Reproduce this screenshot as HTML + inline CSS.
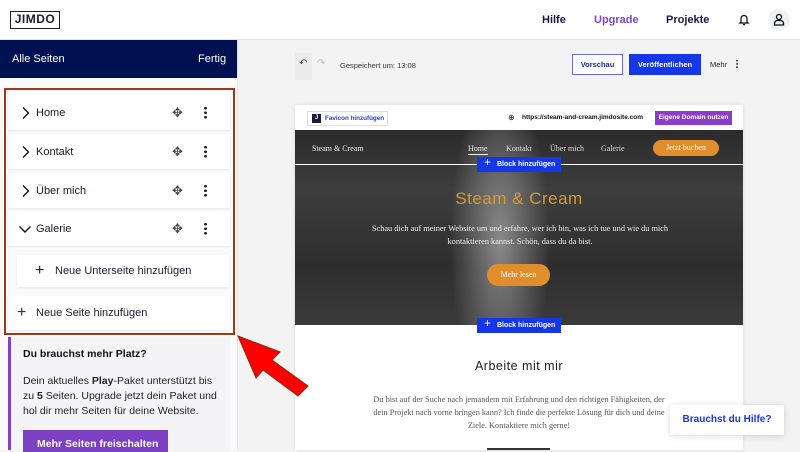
<!DOCTYPE html>
<html><head><meta charset="utf-8"><style>
*{box-sizing:border-box;margin:0;padding:0}
body{width:800px;height:450px;overflow:hidden;font-family:"Liberation Sans",sans-serif;background:#f3f3f4;position:relative;color:#1a1a2e}
.a{position:absolute}
.serif{font-family:"Liberation Serif",serif}
.row{position:absolute;left:8px;width:222px;height:35px;background:#fff;box-shadow:0 1px 2px rgba(0,0,0,.08);font-size:11px;display:flex;align-items:center}
.row .t{position:absolute;left:28px}
.row svg.ch{position:absolute;left:12px}
.mv{position:absolute;left:164px;font-size:13px;color:#444}
.dots{position:absolute;left:196px;width:3px;height:13px;background:radial-gradient(circle,#222 1.3px,transparent 1.5px) 0 0/3px 4.5px repeat-y}
.nw{white-space:nowrap}
</style></head><body>
<div class="a" style="left:0;top:0;width:800px;height:40px;background:#fff;border-bottom:1px solid #e6e6e6"></div>
<div class="a" style="left:10px;top:11px;width:50px;height:18px;border:1.5px solid #1a1a3a;font-weight:bold;font-size:12px;text-align:center;line-height:15px;letter-spacing:.5px;color:#1a1a3a">JIMDO</div>
<div class="a" style="left:542px;top:14px;font-size:11px;font-weight:bold;color:#1a1a4a">Hilfe</div>
<div class="a" style="left:594px;top:14px;font-size:11px;font-weight:bold;color:#7d45c6">Upgrade</div>
<div class="a" style="left:666px;top:14px;font-size:11px;font-weight:bold;color:#1a1a4a">Projekte</div>
<svg class="a" style="left:738px;top:13px" width="12" height="13" viewBox="0 0 12 13"><path d="M3 9V5.5a3 3 0 0 1 6 0V9l1 1H2z M5 11.5h2" fill="none" stroke="#111" stroke-width="1.3"/></svg>
<div class="a" style="left:768px;top:9px;width:22px;height:22px;border-radius:50%;background:#f0f1f5"></div>
<svg class="a" style="left:773px;top:13px" width="12" height="13" viewBox="0 0 12 13"><circle cx="6" cy="4" r="2.5" fill="none" stroke="#111" stroke-width="1.3"/><path d="M1.5 12v-1.5a3 3 0 0 1 3-3h3a3 3 0 0 1 3 3V12z" fill="none" stroke="#111" stroke-width="1.3"/></svg>
<div class="a" style="left:0;top:40px;width:238px;height:410px;background:#fafafb;border-right:1px solid #e3e3e3"></div>
<div class="a" style="left:0;top:40px;width:237px;height:38px;background:#001152"></div>
<div class="a" style="left:12px;top:53px;color:#fff;font-size:11px">Alle Seiten</div>
<div class="a" style="left:198px;top:53px;color:#fff;font-size:11px">Fertig</div>
<div class="row" style="top:95px"><svg class="ch" width="10" height="14" viewBox="0 0 10 14"><path d="M3 1.5l5.5 5.5L3 12.5" fill="none" stroke="#111" stroke-width="1.4"/></svg><span class="t">Home</span><span class="mv">✥</span><span class="dots"></span></div>
<div class="row" style="top:134px"><svg class="ch" width="10" height="14" viewBox="0 0 10 14"><path d="M3 1.5l5.5 5.5L3 12.5" fill="none" stroke="#111" stroke-width="1.4"/></svg><span class="t">Kontakt</span><span class="mv">✥</span><span class="dots"></span></div>
<div class="row" style="top:173px"><svg class="ch" width="10" height="14" viewBox="0 0 10 14"><path d="M3 1.5l5.5 5.5L3 12.5" fill="none" stroke="#111" stroke-width="1.4"/></svg><span class="t">Über mich</span><span class="mv">✥</span><span class="dots"></span></div>
<div class="row" style="top:211px"><svg class="ch" style="left:10px" width="14" height="10" viewBox="0 0 14 10"><path d="M1.5 2.5L7 8l5.5-5.5" fill="none" stroke="#111" stroke-width="1.4"/></svg><span class="t">Galerie</span><span class="mv">✥</span><span class="dots"></span></div>
<div class="row" style="top:255px;left:17px;width:212px;height:32px"><span style="position:absolute;left:18px;font-size:16px;color:#1a1a4a">+</span><span style="position:absolute;left:38px">Neue Unterseite hinzufügen</span></div>
<div class="row" style="top:296px;height:34px"><span style="position:absolute;left:9px;font-size:16px;color:#333">+</span><span class="t">Neue Seite hinzufügen</span></div>
<div class="a" style="left:4px;top:88px;width:231px;height:247px;border:2px solid #9b3a1a"></div>
<div class="a" style="left:8px;top:337px;width:222px;height:113px;background:#f4f4f6;border-left:3px solid #7d45c6"></div>
<div class="a" style="left:23px;top:348px;font-size:10.5px;font-weight:bold;color:#111">Du brauchst mehr Platz?</div>
<div class="a" style="left:23px;top:374px;font-size:10.5px;line-height:15px;color:#222;width:200px">Dein aktuelles <b>Play</b>-Paket unterstützt bis zu <b>5</b> Seiten. Upgrade jetzt dein Paket und hol dir mehr Seiten für deine Website.</div>
<div class="a" style="left:23px;top:430px;width:145px;height:22px;background:#7d3fc4;color:#fff;font-size:10.5px;font-weight:bold;padding:8px 0 0 14px">Mehr Seiten freischalten</div>
<div class="a" style="left:295px;top:53px;width:17px;height:27px;background:#ebebeb"></div>
<div class="a" style="left:299px;top:58px;font-size:10px;color:#444">↶</div>
<div class="a" style="left:317px;top:58px;font-size:10px;color:#bbb">↷</div>
<div class="a" style="left:340px;top:61px;font-size:7.5px;color:#333">Gespeichert um: 13:08</div>
<div class="a" style="left:572px;top:54px;width:51px;height:21px;border:1px solid #6a6ad8;background:#fff;font-size:7.5px;font-weight:bold;color:#1f2a8a;text-align:center;line-height:19px">Vorschau</div>
<div class="a" style="left:629px;top:54px;width:72px;height:21px;background:#1537e8;font-size:7.5px;font-weight:bold;color:#fff;text-align:center;line-height:21px">Veröffentlichen</div>
<div class="a" style="left:710px;top:60px;font-size:7.5px;color:#222">Mehr</div>
<div class="a" style="left:736px;top:59px;width:2px;height:9px;background:radial-gradient(circle,#444 .9px,transparent 1px) 0 0/2px 3.3px repeat-y"></div>
<div class="a" style="left:295px;top:105px;width:448px;height:345px;background:#fff;box-shadow:0 0 4px rgba(0,0,0,.1)"></div>
<div class="a nw" style="left:307px;top:111px;width:81px;height:15px;border:1px solid #ddd;font-size:6.3px;font-weight:bold;color:#2a3ad0;line-height:13px;padding-left:17px">Favicon hinzufügen</div>
<div class="a" style="left:312px;top:114px;width:9px;height:9px;background:#1a1a3a;color:#fff;font-size:6px;text-align:center;line-height:9px;font-weight:bold">J</div>
<div class="a" style="left:508px;top:113px;font-size:8px">⊕</div>
<div class="a nw" style="left:522px;top:114px;font-size:6.5px;font-weight:bold;color:#111">https://steam-and-cream.jimdosite.com</div>
<div class="a nw" style="left:655px;top:111px;width:77px;height:14px;background:#8b3cc8;color:#fff;font-size:6.5px;font-weight:bold;text-align:center;line-height:14px">Eigene Domain nutzen</div>
<div class="a" style="left:295px;top:130px;width:448px;height:195px;background:radial-gradient(ellipse 50px 160px at 205px 110px,#8a8a8a,transparent),linear-gradient(180deg,#2b2b2b,#3d3d3d 30%,#2e2e2e 70%,#3a3a3a)"></div>
<div class="a" style="left:295px;top:164px;width:448px;height:1px;background:#fff"></div>
<div class="a serif nw" style="left:312px;top:144px;font-size:8px;color:#eee">Steam &amp; Cream</div>
<div class="a serif" style="left:468px;top:144px;font-size:8px;color:#eee;border-bottom:1px solid #eee;padding-bottom:1px">Home</div>
<div class="a serif" style="left:506px;top:144px;font-size:8px;color:#ddd">Kontakt</div>
<div class="a serif nw" style="left:550px;top:144px;font-size:8px;color:#ddd">Über mich</div>
<div class="a serif" style="left:601px;top:144px;font-size:8px;color:#ddd">Galerie</div>
<div class="a serif nw" style="left:653px;top:140px;width:66px;height:16px;border-radius:8px;background:#e08e2b;color:#fff;font-size:8px;text-align:center;line-height:16px">Jetzt buchen</div>
<div class="a nw" style="left:477px;top:157px;width:84px;height:15px;background:#1537e8;color:#fff;font-size:7px;font-weight:bold;line-height:15px;padding-left:20px">Block hinzufügen</div>
<div class="a" style="left:484px;top:155px;color:#fff;font-size:12px">+</div>
<div class="a" style="left:295px;top:189px;width:448px;text-align:center;font-size:17px;color:#d99a2c;letter-spacing:.5px">Steam &amp; Cream</div>
<div class="a serif" style="left:362px;top:222px;width:316px;text-align:center;font-size:8.3px;line-height:13px;color:#eee">Schau dich auf meiner Website um und erfahre, wer ich bin, was ich tue und wie du mich kontaktieren kannst. Schön, dass du da bist.</div>
<div class="a serif nw" style="left:487px;top:264px;width:63px;height:22px;border-radius:11px;background:#e08e2b;color:#fff;font-size:8px;text-align:center;line-height:22px">Mehr lesen</div>
<div class="a nw" style="left:477px;top:318px;width:84px;height:15px;background:#1537e8;color:#fff;font-size:7px;font-weight:bold;line-height:15px;padding-left:20px">Block hinzufügen</div>
<div class="a" style="left:484px;top:316px;color:#fff;font-size:12px">+</div>
<div class="a" style="left:295px;top:359px;width:448px;text-align:center;font-size:12.5px;color:#222;letter-spacing:.5px">Arbeite mit mir</div>
<div class="a serif nw" style="left:319px;top:393px;width:400px;text-align:center;font-size:8.3px;line-height:13px;color:#555">Du bist auf der Suche nach jemandem mit Erfahrung und den richtigen Fähigkeiten, der<br>dein Projekt nach vorne bringen kann? Ich finde die perfekte Lösung für dich und deine<br>Ziele. Kontaktiere mich gerne!</div>
<div class="a" style="left:487px;top:448px;width:63px;height:2px;background:#333"></div>
<div class="a nw" style="left:670px;top:405px;width:114px;height:30px;background:#fff;box-shadow:0 1px 6px rgba(0,0,0,.15);color:#1a37d0;font-weight:bold;font-size:10px;text-align:center;line-height:30px">Brauchst du Hilfe?</div>
<svg class="a" style="left:230px;top:330px" width="90" height="80" viewBox="0 0 90 80"><polygon points="8,6 50,22 42,30 78,56 68,66 33,40 26,48" fill="#f00" stroke="#8a2a10" stroke-width="1"/></svg>
</body></html>
